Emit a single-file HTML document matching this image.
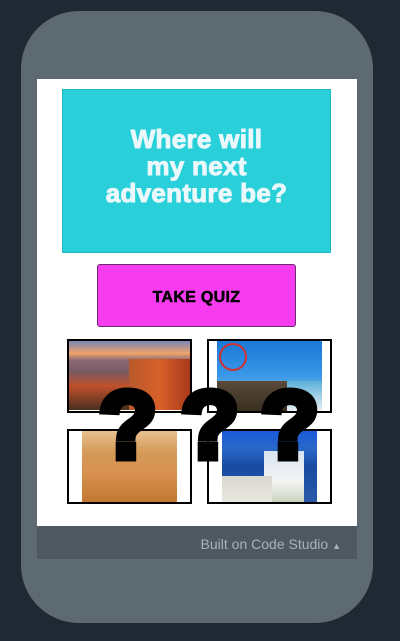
<!DOCTYPE html>
<html><head><style>
body{margin:0;width:400px;height:641px;background:#1f2933;position:relative;overflow:hidden;font-family:"Liberation Sans",sans-serif}
.phone{position:absolute;left:21px;top:11px;width:352px;height:612px;background:#5e6a72;border-radius:58px}
.screen{position:absolute;left:37px;top:79px;width:320px;height:447px;background:#fff}
.foot{position:absolute;left:37px;top:526px;width:320px;height:33px;background:#4e5860;color:#a7b2bc;font-size:14px;line-height:36px;text-align:right;box-sizing:border-box;padding-right:16px}
.title{position:absolute;left:62px;top:89px;width:269px;height:164px;background:#29d0da;border:1px solid #22b8c2;box-sizing:border-box;color:#eaf8fb;font-weight:bold;font-size:26px;line-height:27px;text-align:center;padding-top:36px;-webkit-text-stroke:1px #eaf8fb;letter-spacing:0.3px}
.btn{position:absolute;left:97px;top:264px;width:199px;height:63px;background:#f73cf0;border:1px solid #6b2a6a;border-radius:3px;box-sizing:border-box;font-weight:bold;font-size:16px;text-align:center;line-height:66px;color:#000;-webkit-text-stroke:0.5px #000;letter-spacing:0.3px}
.box{position:absolute;width:121px;height:70px;border:2px solid #000;background:#fff;overflow:hidden}
.img{position:absolute;top:0}
.q{position:absolute;font-weight:bold;font-size:96px;color:#000;line-height:1;top:378px;-webkit-text-stroke:7px #000;width:60px;text-align:center}
</style></head><body>
<div class="phone"></div>
<div class="screen"></div>
<div class="title">Where will<br>my next<br>adventure be?</div>
<div class="btn">TAKE QUIZ</div>
<div class="box" style="left:67px;top:339px">
 <div class="img" style="left:0;width:121px;height:69px;background:linear-gradient(180deg,#7a86b8 0%,#f0a46a 18%,#8a6a78 28%,#7a5a60 45%,#c0502a 65%,#4a3020 100%)"></div>
 <div class="img" style="left:60px;top:18px;width:61px;height:51px;background:linear-gradient(90deg,#b85a2a,#d8602a,#a83a1a)"></div>
</div>
<div class="box" style="left:207px;top:339px">
 <div class="img" style="left:8px;width:105px;height:70px;background:linear-gradient(180deg,#1a78d8 0%,#3a98e8 50%,#5aa8d8 62%,#2a6aa8 100%)"></div>
 <div class="img" style="left:8px;top:40px;width:70px;height:30px;background:linear-gradient(180deg,#5a4a3a,#3a3020)"></div>
 <div class="img" style="left:10px;top:2px;width:28px;height:28px;border:2px solid #d03030;border-radius:50%;box-sizing:border-box"></div>
 <div class="img" style="left:78px;top:40px;width:35px;height:30px;background:linear-gradient(180deg,#5ab0d8,#e8f0f4)"></div>
</div>
<div class="box" style="left:67px;top:429px;height:71px">
 <div class="img" style="left:13px;width:95px;height:71px;background:linear-gradient(180deg,#e8c090 0%,#d49a58 30%,#d89050 60%,#c07830 100%)"></div>
</div>
<div class="box" style="left:207px;top:429px;height:71px">
 <div class="img" style="left:13px;width:95px;height:71px;background:linear-gradient(180deg,#1a5ad8 0%,#2a68c8 25%,#1a4aa0 50%,#2a5aa8 100%)"></div>
 <div class="img" style="left:55px;top:20px;width:40px;height:51px;background:linear-gradient(180deg,#d8e4f0,#f4f4f4 60%,#c8d4c0)"></div>
 <div class="img" style="left:13px;top:45px;width:50px;height:26px;background:linear-gradient(180deg,#d8d8d0,#e8e8e0)"></div>
</div>
<div class="q" style="left:98px">?</div>
<div class="q" style="left:180px">?</div>
<div class="q" style="left:260px">?</div>
<div class="foot">Built on Code Studio <span style="font-size:9px">&#9650;</span></div>
</body></html>
